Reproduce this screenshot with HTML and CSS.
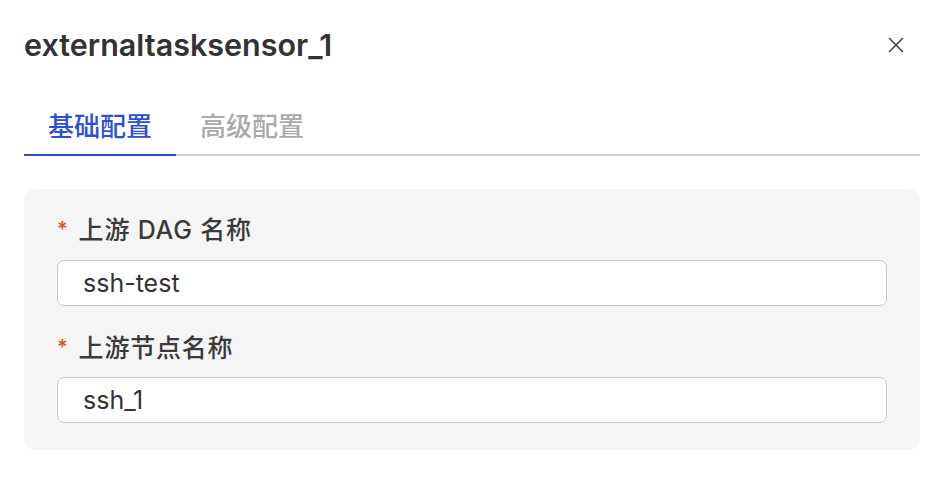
FILE: index.html
```html
<!DOCTYPE html>
<html lang="zh">
<head>
<meta charset="utf-8">
<link rel="stylesheet" href="styles.css">
</head>
<body>
<div class="panel">
  <div class="header">
    <h1 class="title">externaltasksensor_1</h1>
    <button class="close" aria-label="close">
      <svg width="16" height="16" viewBox="0 0 16 16"><path d="M1.5 1.5 L14.5 14.5 M14.5 1.5 L1.5 14.5" stroke="#444" stroke-width="1.6" stroke-linecap="round" fill="none"/></svg>
    </button>
  </div>
  <div class="tabs">
    <div class="tab active">基础配置</div>
    <div class="tab">高级配置</div>
  </div>
  <div class="card">
    <div class="field">
      <div class="label"><span class="req">*</span>上游 DAG 名称</div>
      <div class="input">ssh-test</div>
    </div>
    <div class="field">
      <div class="label"><span class="req">*</span>上游节点名称</div>
      <div class="input">ssh_1</div>
    </div>
  </div>
</div>
</body>
</html>
```
FILE: styles.css
```css
* { box-sizing: border-box; }
body {
  margin: 0;
  background: #fff;
  font-family: Inter, "Noto Sans CJK SC", sans-serif;
  color: #333;
}
.panel {
  padding: 24px 16px 0 24px;
}
.header {
  display: flex;
  align-items: center;
  justify-content: space-between;
  height: 42px;
}
.title {
  margin: 0;
  font-size: 30.5px;
  font-weight: 600;
  color: #333;
  line-height: 42px;
}
.close {
  border: 0;
  background: none;
  padding: 0;
  width: 16px;
  height: 16px;
  margin-right: 16px;
  display: flex;
}
.tabs {
  display: flex;
  margin-top: 42px;
  border-bottom: 2px solid #cfcfcf;
}
.tab {
  font-family: "Noto Sans CJK SC", sans-serif;
  font-size: 26px;
  line-height: 34px;
  font-weight: 500;
  padding: 0 24px 12px;
  color: #aaa;
  margin-bottom: -2px;
  border-bottom: 2px solid transparent;
}
.tab.active {
  color: #2c50d4;
  border-bottom-color: #2c50d4;
}
.card {
  margin-top: 33px;
  background: #f5f5f5;
  border-radius: 12px;
  padding: 25px 33px 27px 33px;
  display: flex;
  flex-direction: column;
  gap: 26px;
}
.label {
  font-family: Inter, "Noto Sans CJK SC", sans-serif;
  font-size: 25px;
  font-weight: 500;
  line-height: 32px;
  color: #3a3a3a;
  display: flex;
  align-items: center;
  letter-spacing: 0.8px;
}
.req {
  color: #e0580e;
  font-size: 20px;
  font-weight: 600;
  margin-right: 10px;
  position: relative;
  top: -1px;
}
.input {
  margin-top: 14px;
  height: 46px;
  border: 1.5px solid #c9c9c9;
  border-radius: 7px;
  background: #fff;
  padding: 2px 0 0 25px;
  font-size: 25px;
  line-height: 41px;
  color: #333;
}
.field + .field .input { margin-top: 13px; }
```
